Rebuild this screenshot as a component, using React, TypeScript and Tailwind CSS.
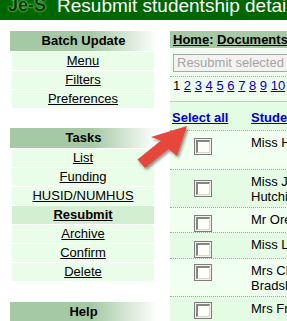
const font = "font-['Liberation_Sans',Arial,sans-serif]";

const batchLinks = ["Menu", "Filters", "Preferences"];
const taskLinks = ["List", "Funding", "HUSID/NUMHUS", "Resubmit", "Archive", "Confirm", "Delete"];

// row heights / checkbox offsets read off the screenshot
const rows = [
  { lines: ["Miss Hannah", ""], h: "h-[39px]", cb: "mt-[7px]", bg: "bg-[#f0fff0]" },
  { lines: ["Miss Jessica", "Hutchinson"], h: "h-[38px]", cb: "mt-[10px]", bg: "bg-[#e3fce3]" },
  { lines: ["Mr Oren Day"], h: "h-[25px]", cb: "mt-[7px]", bg: "bg-[#f0fff0]" },
  { lines: ["Miss Laura Li"], h: "h-[26px]", cb: "mt-[8px]", bg: "bg-[#e3fce3]" },
  { lines: ["Mrs Clare", "Bradshaw"], h: "h-[38px]", cb: "mt-[5px]", bg: "bg-[#f0fff0]" },
  { lines: ["Mrs Fran Lee"], h: "h-[26px]", cb: "mt-[5px]", bg: "bg-[#e3fce3]" },
];

function SideHeader({ title }: { title: string }) {
  return (
    <div className="h-5 leading-5 text-center font-bold text-[13px] text-black bg-linear-to-r from-[#a4c9a4] from-55% to-white">
      {title}
    </div>
  );
}

function SideLink({ label }: { label: string }) {
  const active = label === "Resubmit";
  return (
    <div
      className={`mt-px ml-[2px] mr-[3px] h-[18px] leading-[18px] text-center text-[13px] ${
        active ? "bg-[#d2efd2] font-bold" : "bg-[#e9fde9]"
      }`}
    >
      <span className="underline text-black">{label}</span>
    </div>
  );
}

function Checkbox() {
  return (
    <div className="w-[18px] h-[17px] border border-[#7c7c7c] bg-[#f4f2ea] p-px">
      <div className="w-full h-full border-t-2 border-l-2 border-[#858585] border-b border-r border-b-[#dcd8c8] border-r-[#dcd8c8] bg-[#fffffa]" />
    </div>
  );
}

function Arrow() {
  return (
    <svg className="absolute left-0 top-0 pointer-events-none" width="287" height="321">
      <defs>
        <filter id="sh" x="-20%" y="-20%" width="150%" height="150%">
          <feDropShadow dx="1.5" dy="2" stdDeviation="1.6" floodColor="#000" floodOpacity="0.45" />
        </filter>
      </defs>
      <polygon
        filter="url(#sh)"
        fill="#e5463d"
        points="187,126 177,156 168.5,149 145,168 137.5,159.5 161,140.5 151,137"
      />
    </svg>
  );
}

export default function App() {
  return (
    <div className={`relative w-[287px] h-[321px] overflow-hidden bg-white ${font}`}>
      <div className="h-5 bg-[#006600] overflow-hidden flex items-start whitespace-nowrap">
        <span className="ml-[8px] -mt-[4px] text-[18px] leading-[19px] font-bold text-[#142a0c] [text-shadow:0_0_1px_#7cff6c,0_0_2px_#45d83a,0_0_3px_#2fb82a]">
          Je-S
        </span>
        <span className="ml-[11px] -mt-[4px] text-[19px] leading-[19px] text-white">
          Resubmit studentship details
        </span>
      </div>

      <div className="flex mt-[11px]">
        <div className="ml-[10px] w-[147px] shrink-0">
          <SideHeader title="Batch Update" />
          {batchLinks.map((l) => (
            <SideLink key={l} label={l} />
          ))}
          <div className="h-5" />
          <SideHeader title="Tasks" />
          {taskLinks.map((l) => (
            <SideLink key={l} label={l} />
          ))}
          <div className="h-[21px]" />
          <SideHeader title="Help" />
        </div>

        <div className="ml-[13px] w-[160px] shrink-0 text-[13px]">
          <div className="h-[17px] leading-[17px] bg-[#a6caa6] pl-[3px] font-bold text-black whitespace-nowrap">
            <span className="underline">Home</span>: <span className="underline">Documents</span>
          </div>
          <div className="mt-px bg-[#eefdee]">
            <div className="pt-[5px] pl-[3px]">
              <div className="h-[18px] leading-[16px] border border-[#a9a9a9] bg-[#f3f3f1] pl-[3px] text-[#a6a6a6] whitespace-nowrap">
                Resubmit selected documents
              </div>
            </div>
            <div className="mt-[4px] border-t border-dotted border-[#8fb48f] h-[25px] pl-[3px] pt-px leading-[15px] whitespace-nowrap">
              <span className="text-black">1 </span>
              {[2, 3, 4, 5, 6, 7, 8, 9, 10, 11].map((n) => (
                <span key={n}>
                  <span className="underline text-[#0000cc]">{n}</span>{" "}
                </span>
              ))}
            </div>
          </div>
          <div className="border-t border-[#b7d6b7] bg-[#e4fbe4] h-[29px] pt-[8px] leading-[15px] font-bold text-[#0000cc] flex whitespace-nowrap">
            <span className="w-[81px] pl-[2px] shrink-0 underline">Select all</span>
            <span className="underline">Student</span>
          </div>
          {rows.map((r, i) => (
            <div key={i} className={`flex border-t border-dotted border-[#8fb48f] ${r.h} ${r.bg}`}>
              <div className={`w-[81px] shrink-0 pl-[24px] ${r.cb}`}>
                <Checkbox />
              </div>
              <div className="pt-[4px] leading-[15px] text-black whitespace-nowrap">
                {r.lines.map((t, j) => (
                  <div key={j} className="h-[15px]">
                    {t}
                  </div>
                ))}
              </div>
            </div>
          ))}
        </div>
      </div>

      <Arrow />
    </div>
  );
}
